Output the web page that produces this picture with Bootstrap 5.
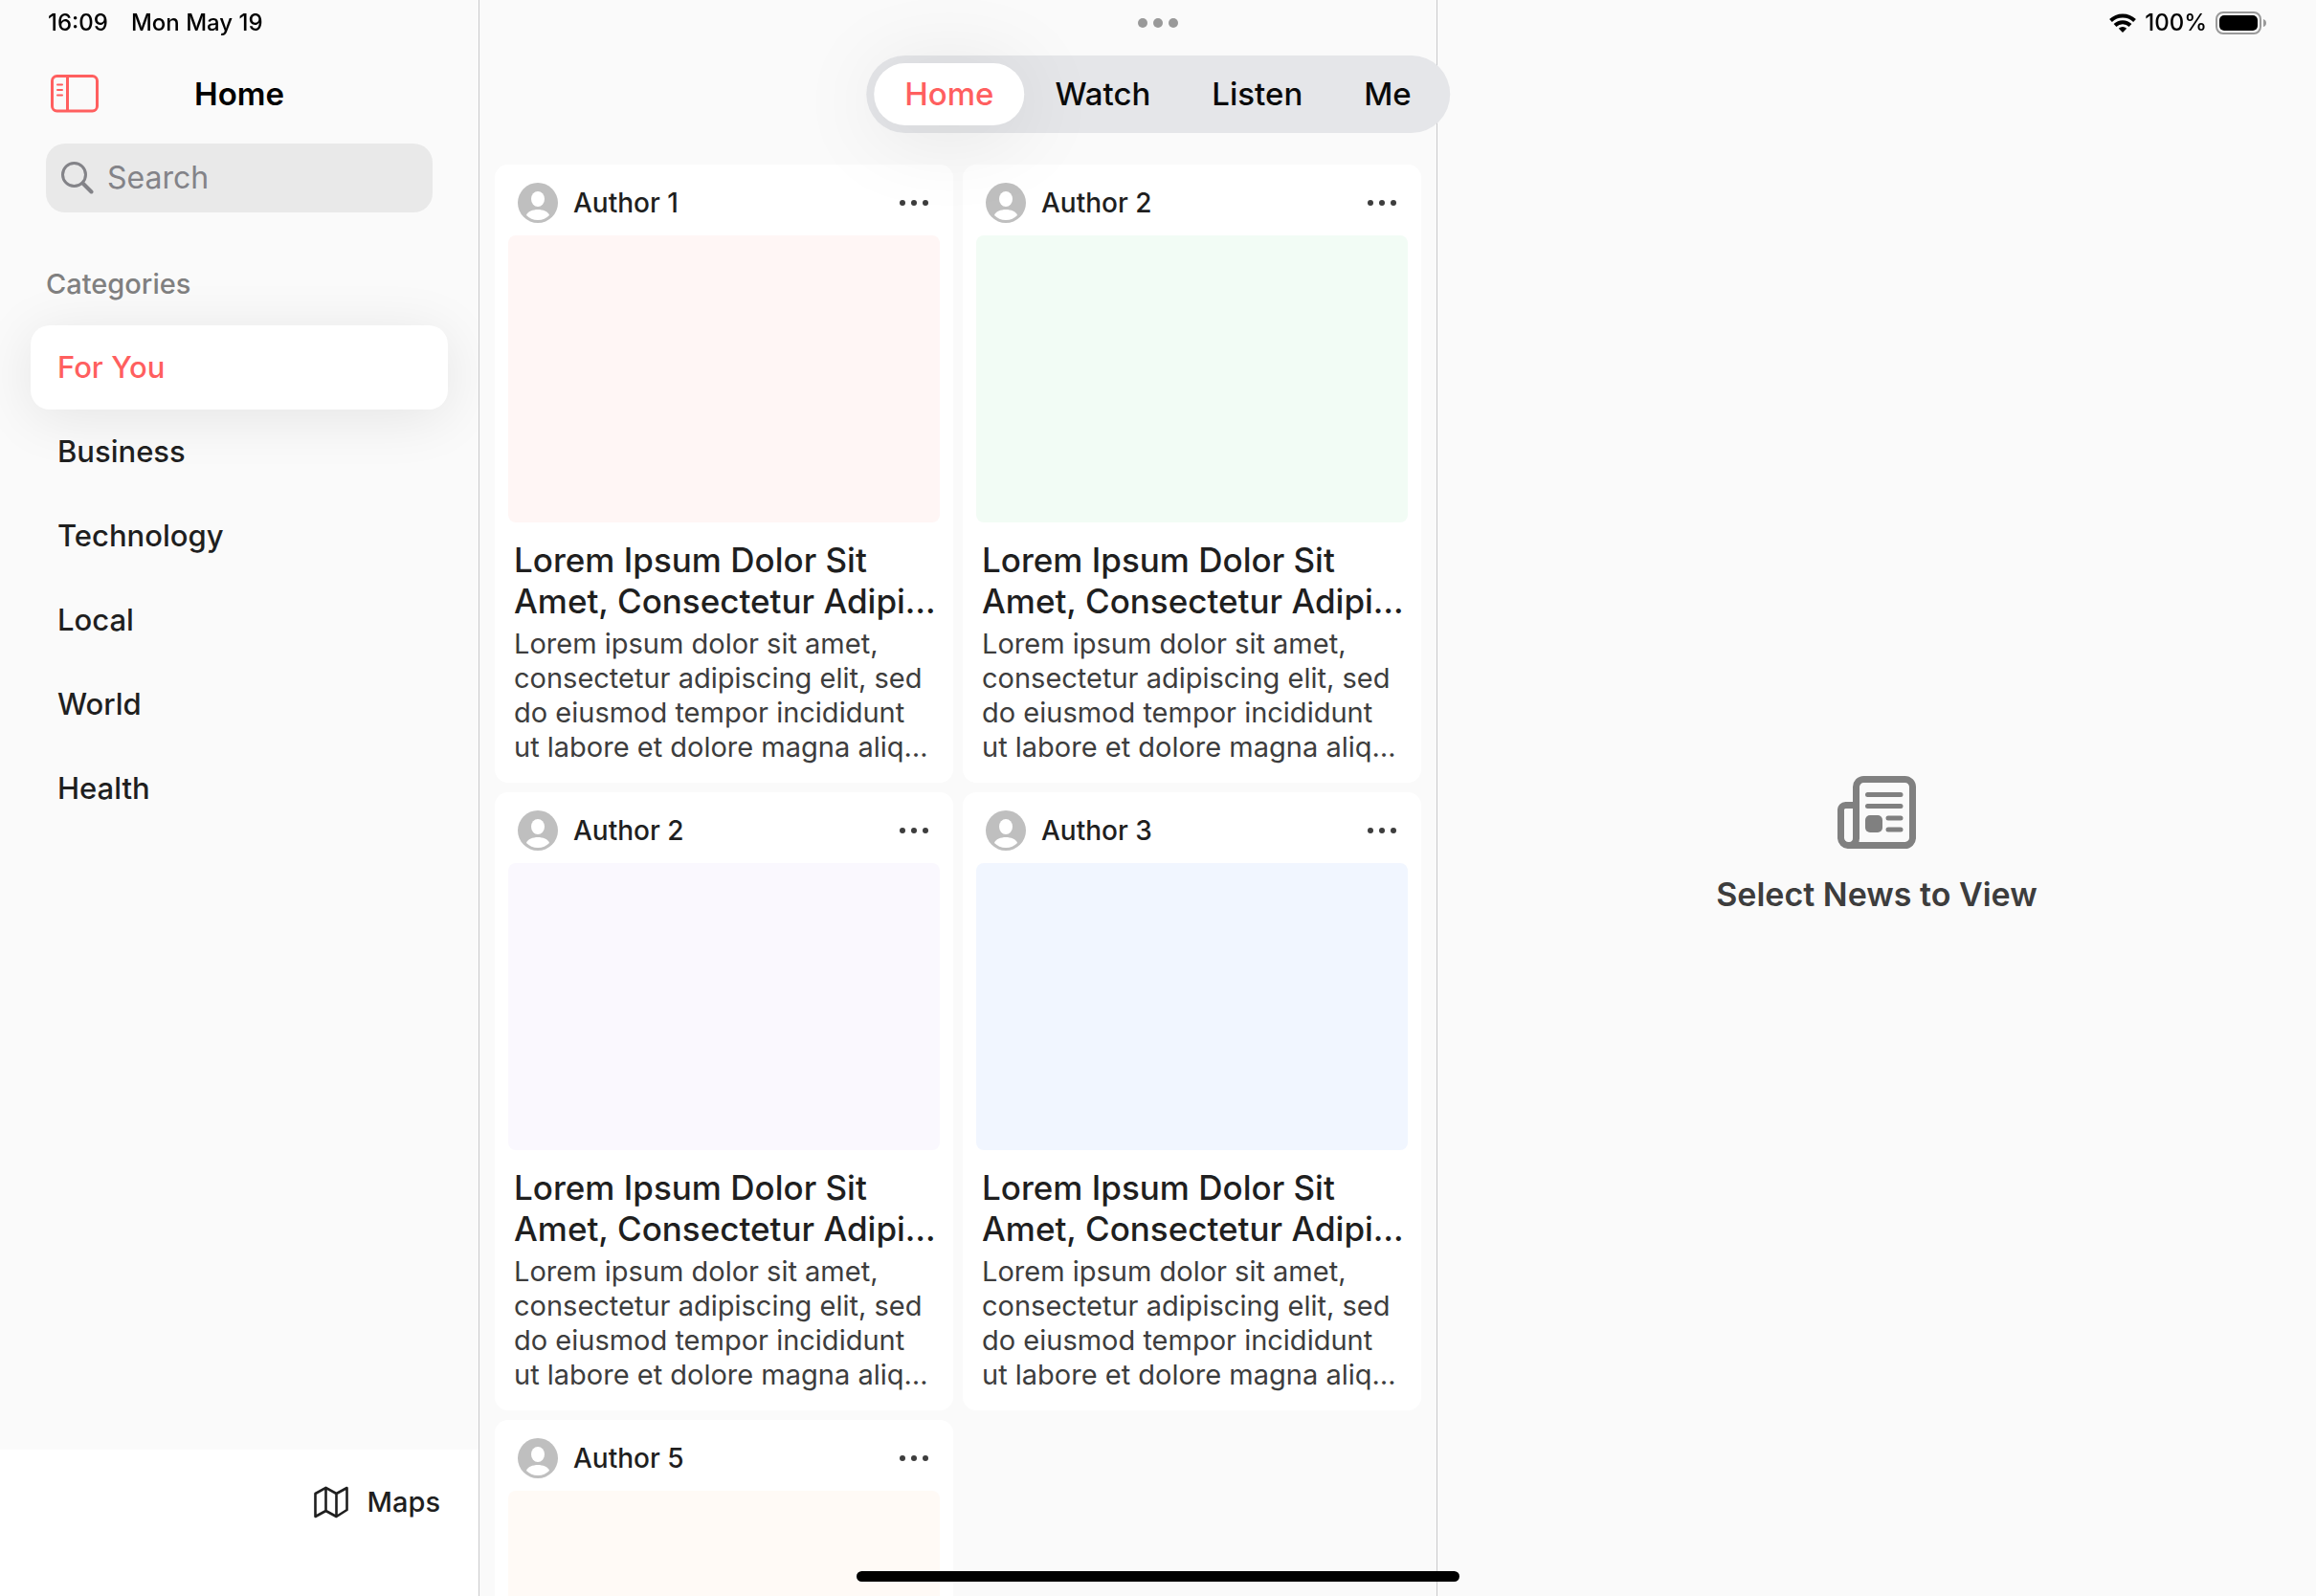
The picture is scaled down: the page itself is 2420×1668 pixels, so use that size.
<!DOCTYPE html>
<html lang="en">
<head>
<meta charset="utf-8">
<meta name="viewport" content="width=device-width, initial-scale=1">
<title>Home</title>
<link href="https://cdn.jsdelivr.net/npm/bootstrap@5.3.0/dist/css/bootstrap.min.css" rel="stylesheet">
<style>
:root { --accent: #ff5f5f; --ink: #1f1f1f; --pane: #fafafa; --rule: #c9c9cb; }
body { font-family: Inter, "Liberation Sans", sans-serif; background: var(--pane); color: var(--ink); font-weight: 500; }
.app-grid { display: grid; grid-template-columns: 501px 1001fr 918fr; }
.pane-line { border-right: 1px solid var(--rule); }

/* status bar */
.status-bar { padding: 8px 51px 8px 50px; font-size: 24px; line-height: 32px; color: #000; }
.status-left { gap: 24px; }
.status-right { gap: 9px; }
.window-dots { top: 19px; gap: 6px; }
.window-dots i { width: 10px; height: 10px; background: #999; }

/* tab bar */
.tab-shell { top: 58px; padding: 8px; border-radius: 41px; background: #e5e6e9; }
.tab-shell .nav-link { padding: 0 32px; font-size: 33px; line-height: 65px; border-radius: 33px; color: #0a0a0a; }
.tab-shell .nav-link.active { background: #fff; color: var(--accent); box-shadow: 0 8px 90px rgba(0, 0, 0, .1); }

/* sidebar */
.side-head { margin-top: 66px; height: 64px; padding: 0 50px; }
.side-toggle { left: 53px; }
.side-title { font-size: 33px; line-height: 64px; font-weight: 600; color: #000; }
.search-box { margin: 20px 48px 0; height: 72px; border-radius: 20px; background: #e9e9e9; padding: 0 16px; gap: 14px; }
.search-box input { font-size: 32px; line-height: 42px; font-weight: 400; }
.search-box input::placeholder { color: #838388; opacity: 1; }
.side-label { margin: 55px 48px 0; font-size: 29px; line-height: 40px; color: #808080; font-weight: 500; }
.side-list { margin: 23px 32px 0; }
.side-list a { height: 88px; padding: 0 28px; font-size: 31px; line-height: 88px; border-radius: 20px; color: var(--ink); }
.side-list a.active { background: #fff; color: var(--accent); box-shadow: 0 8px 60px rgba(0, 0, 0, .09); }
.side-foot { height: 153px; background: #fff; padding: 34px 40px 0 0; }
.side-foot a { font-size: 29px; line-height: 42px; color: var(--ink); gap: 20px; }

/* news feed */
.feed { padding: 172px 16px 0; overflow-y: auto; scrollbar-width: none; }
.feed-grid { display: grid; grid-template-columns: 1fr 1fr; gap: 10px; }
.news { height: 646px; border-radius: 14px; background: #fff; padding: 14px; }
.news-head { height: 60px; padding: 0 4px 8px 10px; gap: 16px; font-size: 28px; line-height: 36px; }
.news-photo { height: 300px; border-radius: 8px; }
.tint-red { background: #fff6f5; }
.tint-green { background: #f2fcf5; }
.tint-violet { background: #faf8fe; }
.tint-blue { background: #f1f6ff; }
.tint-orange { background: #fffaf6; }
.news-title { margin: 18px 0 0; padding-left: 6px; font-size: 35px; line-height: 43px; font-weight: 500; }
.news-text { margin: 5px 0 0; padding: 0 6px; font-size: 29px; line-height: 36px; font-weight: 400; color: #3d3d3d; }

/* detail */
.detail { padding-top: 100px; gap: 26px; font-size: 34px; line-height: 44px; font-weight: 600; color: #3d3d3d; }
.home-indicator { bottom: 15px; width: 630px; height: 11px; background: #000; }
</style>
<script src="https://cdn.jsdelivr.net/npm/bootstrap@5.3.0/dist/js/bootstrap.bundle.min.js"></script>
</head>
<body>
<svg class="d-none" aria-hidden="true">
  <symbol id="avatar" viewBox="0 0 42 42"><circle cx="21" cy="21" r="21" fill="#bfbfbf"/><ellipse cx="21" cy="17" rx="7" ry="8" fill="#fff"/><path d="M9 34c1-4 7-6 12-6s11 2 12 6c-3 3-7 5-12 5s-9-2-12-5z" fill="#fff"/></symbol>
  <symbol id="more" viewBox="0 0 30 6"><g fill="#3d3d3d"><circle cx="3" cy="3" r="3"/><circle cx="15" cy="3" r="3"/><circle cx="27" cy="3" r="3"/></g></symbol>
</svg>

<header class="status-bar position-fixed top-0 start-0 end-0 d-flex justify-content-between z-3">
  <div class="status-left d-flex"><span>16:09</span><span>Mon May 19</span></div>
  <div class="window-dots position-absolute start-50 translate-middle-x d-flex">
    <i class="rounded-circle"></i><i class="rounded-circle"></i><i class="rounded-circle"></i>
  </div>
  <div class="status-right d-flex align-items-center">
    <svg width="28" height="20" viewBox="0 0 28 20"><g fill="none" stroke="#000" stroke-width="4"><path d="M1.500 7.500a18 18 0 0 1 25 0M6 12.500a11.500 11.500 0 0 1 16 0"/></g><path d="M14 20l-4.200-4.300a6.300 6.300 0 0 1 8.400 0z"/></svg>
    <span>100%</span>
    <svg width="54" height="24" viewBox="0 0 54 24"><rect x="1" y="1" width="46" height="22" rx="7" fill="none" stroke="#999" stroke-width="2"/><rect x="4" y="4" width="40" height="16" rx="5"/><path d="M50 8q3 1 3 4t-3 4z" fill="#999"/></svg>
  </div>
</header>

<nav class="tab-shell position-fixed start-50 translate-middle-x z-2" aria-label="Sections">
  <ul class="nav nav-pills flex-nowrap">
    <li class="nav-item"><a class="nav-link active" href="#home" aria-current="page">Home</a></li>
    <li class="nav-item"><a class="nav-link" href="#watch">Watch</a></li>
    <li class="nav-item"><a class="nav-link" href="#listen">Listen</a></li>
    <li class="nav-item"><a class="nav-link" href="#me">Me</a></li>
  </ul>
</nav>

<div class="app-grid vh-100 overflow-hidden">
  <aside class="pane-line d-flex flex-column vh-100 overflow-hidden">
    <div class="side-head position-relative d-flex align-items-center justify-content-center">
      <button class="side-toggle btn p-0 border-0 position-absolute d-flex" type="button" aria-label="Toggle sidebar">
        <svg width="50" height="40" viewBox="0 0 50 40" fill="none" stroke="#ff5f5f" stroke-width="3"><rect x="1.500" y="1.500" width="47" height="36.500" rx="5"/><path d="M17.500 1v37"/><path d="M7 10.500h5M7 16h5M7 21.500h5" stroke-width="2" stroke-linecap="round"/></svg>
      </button>
      <h1 class="side-title m-0">Home</h1>
    </div>
    <label class="search-box d-flex align-items-center">
      <svg class="flex-shrink-0" width="34" height="34" viewBox="0 0 34 34" fill="none" stroke="#838388" stroke-width="3" stroke-linecap="round"><circle cx="13.500" cy="13.500" r="12"/><path d="M22.500 22.500l9 9" stroke-width="4"/></svg>
      <input class="form-control border-0 bg-transparent shadow-none p-0" type="search" placeholder="Search" aria-label="Search">
    </label>
    <h2 class="side-label">Categories</h2>
    <nav class="side-list nav flex-column" aria-label="Categories">
      <a class="text-decoration-none active" href="#foryou">For You</a>
      <a class="text-decoration-none" href="#business">Business</a>
      <a class="text-decoration-none" href="#technology">Technology</a>
      <a class="text-decoration-none" href="#local">Local</a>
      <a class="text-decoration-none" href="#world">World</a>
      <a class="text-decoration-none" href="#health">Health</a>
    </nav>
    <div class="side-foot mt-auto d-flex justify-content-end align-items-start">
      <a class="d-flex align-items-center text-decoration-none" href="#maps">
        <svg width="36" height="34" viewBox="0 0 36 34" fill="none" stroke="#1f1f1f" stroke-width="2.600" stroke-linejoin="round"><path d="M1.500 8L12.500 1.800 23.500 8 34.500 2v23L23.500 32 12.500 26 1.500 32zM12.500 2v24M23.500 8v24"/></svg>
        <span>Maps</span>
      </a>
    </div>
  </aside>

  <main class="feed pane-line vh-100">
    <div class="feed-grid">
      <article class="news">
        <div class="news-head d-flex align-items-center"><svg width="42" height="42"><use href="#avatar"/></svg><span>Author 1</span><button class="btn p-2 border-0 ms-auto d-flex" type="button" aria-label="More"><svg width="30" height="6"><use href="#more"/></svg></button></div>
        <div class="news-photo tint-red"></div>
        <h3 class="news-title">Lorem Ipsum Dolor Sit Amet, Consectetur Adipi…</h3>
        <p class="news-text">Lorem ipsum dolor sit amet, consectetur adipiscing elit, sed do eiusmod tempor incididunt ut labore et dolore magna aliq…</p>
      </article>
      <article class="news">
        <div class="news-head d-flex align-items-center"><svg width="42" height="42"><use href="#avatar"/></svg><span>Author 2</span><button class="btn p-2 border-0 ms-auto d-flex" type="button" aria-label="More"><svg width="30" height="6"><use href="#more"/></svg></button></div>
        <div class="news-photo tint-green"></div>
        <h3 class="news-title">Lorem Ipsum Dolor Sit Amet, Consectetur Adipi…</h3>
        <p class="news-text">Lorem ipsum dolor sit amet, consectetur adipiscing elit, sed do eiusmod tempor incididunt ut labore et dolore magna aliq…</p>
      </article>
      <article class="news">
        <div class="news-head d-flex align-items-center"><svg width="42" height="42"><use href="#avatar"/></svg><span>Author 2</span><button class="btn p-2 border-0 ms-auto d-flex" type="button" aria-label="More"><svg width="30" height="6"><use href="#more"/></svg></button></div>
        <div class="news-photo tint-violet"></div>
        <h3 class="news-title">Lorem Ipsum Dolor Sit Amet, Consectetur Adipi…</h3>
        <p class="news-text">Lorem ipsum dolor sit amet, consectetur adipiscing elit, sed do eiusmod tempor incididunt ut labore et dolore magna aliq…</p>
      </article>
      <article class="news">
        <div class="news-head d-flex align-items-center"><svg width="42" height="42"><use href="#avatar"/></svg><span>Author 3</span><button class="btn p-2 border-0 ms-auto d-flex" type="button" aria-label="More"><svg width="30" height="6"><use href="#more"/></svg></button></div>
        <div class="news-photo tint-blue"></div>
        <h3 class="news-title">Lorem Ipsum Dolor Sit Amet, Consectetur Adipi…</h3>
        <p class="news-text">Lorem ipsum dolor sit amet, consectetur adipiscing elit, sed do eiusmod tempor incididunt ut labore et dolore magna aliq…</p>
      </article>
      <article class="news">
        <div class="news-head d-flex align-items-center"><svg width="42" height="42"><use href="#avatar"/></svg><span>Author 5</span><button class="btn p-2 border-0 ms-auto d-flex" type="button" aria-label="More"><svg width="30" height="6"><use href="#more"/></svg></button></div>
        <div class="news-photo tint-orange"></div>
      </article>
    </div>
  </main>

  <section class="detail d-flex flex-column align-items-center justify-content-center vh-100">
    <svg width="82" height="76" viewBox="0 0 82 76" fill="none" stroke="#808080" stroke-width="7"><path d="M19.500 66V12a8 8 0 0 1 8-8.500h43a8 8 0 0 1 8 8V64a8 8 0 0 1-8 8.500H12A8 8 0 0 1 3.500 64V36a5 5 0 0 1 5-5.500h11"/><path d="M19.500 60v5q0 7-7 7.500"/><path d="M31.500 19.500H66M31.500 31.500H66M53 44H66M53 56H66" stroke-width="5" stroke-linecap="round"/><rect x="29" y="41" width="18" height="18" rx="5" fill="#808080" stroke="none"/></svg>
    <span>Select News to View</span>
  </section>
</div>

<div class="home-indicator position-fixed start-50 translate-middle-x rounded-pill z-3"></div>
</body>
</html>
